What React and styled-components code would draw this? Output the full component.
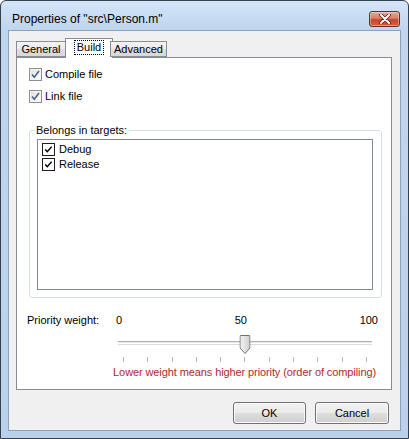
import React from "react";
import styled, { createGlobalStyle } from "styled-components";

const Page = createGlobalStyle`
  html, body {
    margin: 0;
    padding: 0;
    background: #fff;
  }
  body {
    font-family: "Liberation Sans", Arial, sans-serif;
    font-size: 11px;
    color: #000;
  }
`;

const Window = styled.div`
  width: 409px;
  height: 439px;
  box-sizing: border-box;
  border: 1px solid #35404e;
  border-radius: 6px 6px 0 0;
  background: linear-gradient(to bottom, #d4e5f7 0px, #c0d6ee 28px, #b9d1ea 100%);
  padding: 0 7px 7px;
  display: flex;
  flex-direction: column;
`;

const TitleBar = styled.div`
  height: 29px;
  display: flex;
  align-items: center;
  justify-content: space-between;
  padding: 6px 1px 0 4px;
  box-sizing: border-box;
`;

const Title = styled.span`
  font-size: 12px;
  color: #000;
`;

const CloseButton = styled.div`
  width: 31px;
  height: 16px;
  box-sizing: border-box;
  border: 1px solid #6f2a1f;
  border-radius: 3px;
  background: linear-gradient(to bottom, #e9aa9a 0%, #d77c66 45%, #c6452b 55%, #d2623f 100%);
  box-shadow: inset 0 0 0 1px rgba(255, 255, 255, 0.35);
  display: flex;
  align-items: center;
  justify-content: center;
`;

const Client = styled.div`
  flex: 1;
  border: 1px solid #8da2b9;
  background: #f0f0f0;
  display: flex;
  flex-direction: column;
  padding: 0 8px 0 7px;
`;

const TabRow = styled.div`
  display: flex;
  align-items: flex-end;
  height: 26px;
  box-sizing: border-box;
  padding-top: 7px;
  position: relative;
  z-index: 1;
`;

const Tab = styled.div`
  box-sizing: border-box;
  width: ${(p) => p.$w}px;
  text-align: center;
  height: ${(p) => (p.$active ? "20px" : "16px")};
  margin: ${(p) => (p.$active ? "0 -2px -1px -2px" : "0")};
  padding-top: ${(p) => (p.$active ? "2px" : "1px")};
  border: 1px solid #898c95;
  border-bottom: ${(p) => (p.$active ? "none" : "1px solid #898c95")};
  background: ${(p) =>
    p.$active ? "#fff" : "linear-gradient(to bottom, #f3f3f3 0%, #ebebeb 50%, #dedede 50%, #d8d8d8 100%)"};
  line-height: 13px;
  & + & {
    margin-left: ${(p) => (p.$active ? "-2px" : "-1px")};
  }
`;

const Focus = styled.span`
  display: inline-block;
  outline: 1px dotted #000;
  padding: 0 2px;
`;

const Panel = styled.div`
  width: 376px;
  height: 333px;
  box-sizing: border-box;
  border: 1px solid #898c95;
  background: #fff;
  padding: 10px 9px 0 12px;
  display: flex;
  flex-direction: column;
`;

const CheckRow = styled.label`
  display: flex;
  align-items: center;
  gap: 3px;
  height: 13px;
  line-height: 13px;
  margin-bottom: 9px;
`;

const WinCheck = styled.span`
  width: 13px;
  height: 13px;
  box-sizing: border-box;
  border: 1px solid #8e8f8f;
  background: linear-gradient(135deg, #dcdcdc 0%, #f4f4f4 60%, #ffffff 100%);
  box-shadow: inset 0 0 0 1px #f4f4f4;
  display: flex;
  align-items: center;
  justify-content: center;
`;

const Group = styled.fieldset`
  margin: 11px 0 0 0;
  width: 353px;
  height: 175px;
  box-sizing: border-box;
  border: 1px solid #d5dfe5;
  border-radius: 3px;
  box-shadow: inset 1px 1px 0 #fff, 1px 1px 0 #fff;
  padding: 2px 8px 8px 7px;
  min-width: 0;
`;

const Legend = styled.legend`
  padding: 0 2px;
  margin-left: -3px;
  line-height: 14px;
`;

const ListBox = styled.div`
  height: 151px;
  box-sizing: border-box;
  border: 1px solid #828790;
  background: #fff;
  padding: 2px 4px;
`;

const ListItem = styled.div`
  display: flex;
  align-items: center;
  gap: 4px;
  height: 15px;
  line-height: 15px;
`;

const ListCheck = styled.span`
  width: 13px;
  height: 13px;
  box-sizing: border-box;
  border: 1px solid #1c1c1c;
  background: #fff;
  display: flex;
  align-items: center;
  justify-content: center;
`;

const SliderGrid = styled.div`
  display: grid;
  grid-template-columns: 87px 266px;
  margin-top: 16px;
  margin-left: -2px;
`;

const Label = styled.div`
  line-height: 13px;
`;

const SliderCol = styled.div`
  display: flex;
  flex-direction: column;
`;

const Numbers = styled.div`
  display: flex;
  justify-content: space-between;
  padding: 0 2px;
  line-height: 13px;
`;

const Track = styled.div`
  position: relative;
  height: 20px;
  margin: 9px 8px 0 4px;
`;

const Groove = styled.div`
  position: absolute;
  left: 0;
  right: 0;
  top: 5px;
  height: 3px;
  box-sizing: border-box;
  border-top: 1px solid #b0b0b0;
  border-bottom: 1px solid #fff;
  background: #e7e7e7;
  box-shadow: 0 1px 0 #dcdcdc;
`;

const Thumb = styled.svg`
  position: absolute;
  top: -1px;
  left: 50%;
  transform: translateX(-50%);
`;

const Ticks = styled.div`
  display: flex;
  justify-content: space-between;
  height: 5px;
  margin-top: 1px;
  padding: 0 13px 0 9px;
`;

const Tick = styled.span`
  width: 1px;
  height: 5px;
  background: #b4b4b4;
`;

const Note = styled.div`
  grid-column: 1 / -1;
  color: #b0282e;
  text-align: right;
  white-space: nowrap;
  letter-spacing: -0.1px;
  padding-right: 4px;
  margin-top: 4px;
  line-height: 13px;
`;

const ButtonRow = styled.div`
  display: flex;
  justify-content: flex-end;
  gap: 9px;
  margin-top: 12px;
  padding-right: 3px;
`;

const Button = styled.button`
  width: ${(p) => p.$w}px;
  height: 22px;
  box-sizing: border-box;
  border: 1px solid #707070;
  border-radius: 3px;
  background: linear-gradient(to bottom, #f2f2f2 0%, #ebebeb 48%, #dddddd 52%, #cfcfcf 100%);
  box-shadow: inset 0 0 0 1px #fbfbfb;
  font-family: "Liberation Sans", Arial, sans-serif;
  font-size: 11px;
  color: #000;
  padding: 0;
`;

const BlueTick = () => (
  <svg width="9" height="9" viewBox="0 0 9 9">
    <path d="M1 4.5 L3.3 7.2 L8 1" fill="none" stroke="#4d6185" strokeWidth="1.6" />
  </svg>
);

const BlackTick = () => (
  <svg width="9" height="9" viewBox="0 0 9 9">
    <path d="M1.2 4.4 L3.3 6.6 L7.6 1.8" fill="none" stroke="#000" strokeWidth="1.4" />
  </svg>
);

export default function App() {
  return (
    <>
      <Page />
      <Window>
        <TitleBar>
          <Title>Properties of "src\Person.m"</Title>
          <CloseButton>
            <svg width="12" height="10" viewBox="0 0 12 10">
              <path d="M2 1 L10 9 M10 1 L2 9" stroke="#5a1c12" strokeWidth="3.6" strokeLinecap="round" />
              <path d="M2 1 L10 9 M10 1 L2 9" stroke="#fff" strokeWidth="2" strokeLinecap="round" />
            </svg>
          </CloseButton>
        </TitleBar>
        <Client>
          <TabRow>
            <Tab $w={50}>General</Tab>
            <Tab $w={48} $active>
              <Focus>Build</Focus>
            </Tab>
            <Tab $w={57}>Advanced</Tab>
          </TabRow>
          <Panel>
            <CheckRow>
              <WinCheck>
                <BlueTick />
              </WinCheck>
              Compile file
            </CheckRow>
            <CheckRow>
              <WinCheck>
                <BlueTick />
              </WinCheck>
              Link file
            </CheckRow>
            <Group>
              <Legend>Belongs in targets:</Legend>
              <ListBox>
                <ListItem>
                  <ListCheck>
                    <BlackTick />
                  </ListCheck>
                  Debug
                </ListItem>
                <ListItem>
                  <ListCheck>
                    <BlackTick />
                  </ListCheck>
                  Release
                </ListItem>
              </ListBox>
            </Group>
            <SliderGrid>
              <Label>Priority weight:</Label>
              <SliderCol>
                <Numbers>
                  <span>0</span>
                  <span>50</span>
                  <span>100</span>
                </Numbers>
                <Track>
                  <Groove />
                  <Thumb width="11" height="19" viewBox="0 0 11 19">
                    <defs>
                      <linearGradient id="th" x1="0" y1="0" x2="1" y2="0">
                        <stop offset="0" stopColor="#f4f4f4" />
                        <stop offset="1" stopColor="#d0d0d0" />
                      </linearGradient>
                    </defs>
                    <path
                      d="M1.5 0.5 H9.5 Q10.5 0.5 10.5 1.5 V13 L5.5 18.5 L0.5 13 V1.5 Q0.5 0.5 1.5 0.5 Z"
                      fill="url(#th)"
                      stroke="#707070"
                    />
                  </Thumb>
                </Track>
                <Ticks>
                  {Array.from({ length: 11 }).map((_, i) => (
                    <Tick key={i} />
                  ))}
                </Ticks>
              </SliderCol>
              <Note>Lower weight means higher priority (order of compiling)</Note>
            </SliderGrid>
          </Panel>
          <ButtonRow>
            <Button $w={73}>OK</Button>
            <Button $w={74}>Cancel</Button>
          </ButtonRow>
        </Client>
      </Window>
    </>
  );
}
